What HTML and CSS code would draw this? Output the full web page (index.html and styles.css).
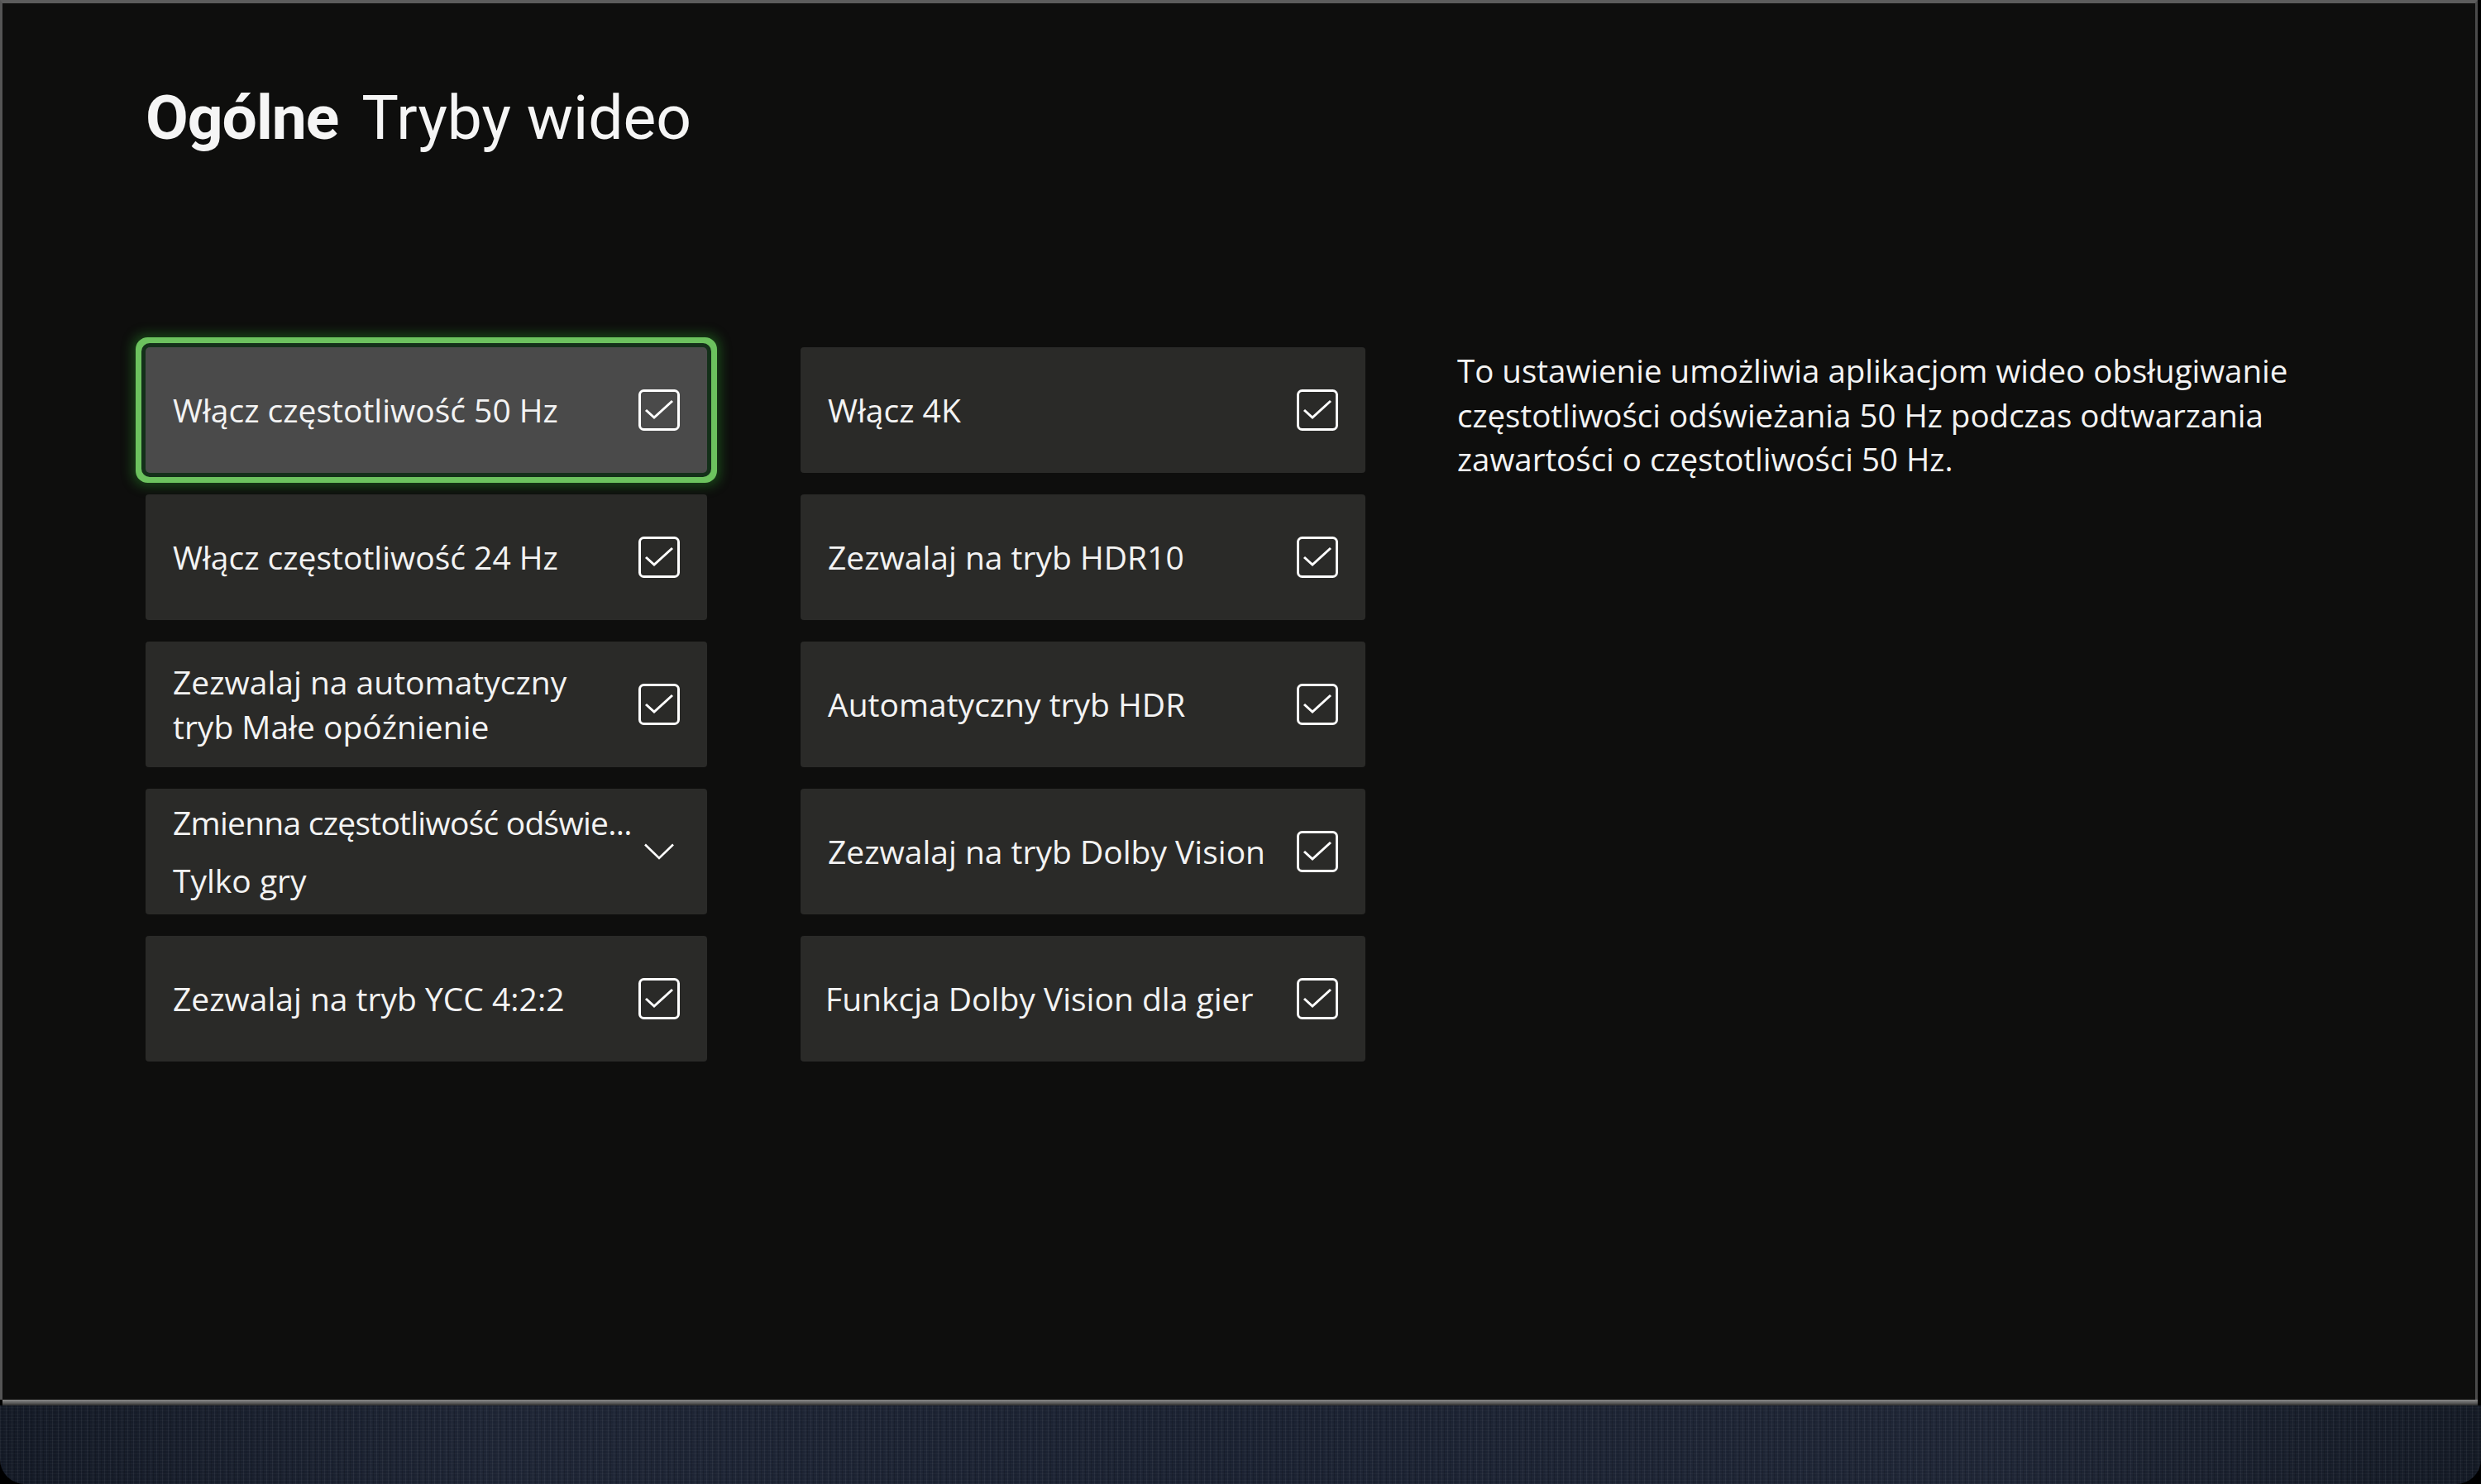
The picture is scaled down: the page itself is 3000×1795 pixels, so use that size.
FILE: index.html
```html
<!DOCTYPE html>
<html lang="pl">

<head>
    <meta charset="UTF-8">
    <meta name="viewport" content="width=device-width, initial-scale=1.0">
    <title>Tryby wideo</title>
    <link rel="stylesheet" href="styles.css">
</head>

<body>
    <div class="tv">
        <div class="screen">
            <h1 class="page-title">
                <span class="section">Ogólne</span>
                <span class="page">Tryby wideo</span>
            </h1>

            <main class="settings">
                <section class="options">
                    <div class="option focused">
                        <span class="label">Włącz częstotliwość 50 Hz</span>
                        <svg class="checkbox" viewBox="0 0 50 50"><rect x="1.5" y="1.5" width="47" height="47" rx="5"/><path d="M9 25l10 9 22-20"/></svg>
                    </div>
                    <div class="option">
                        <span class="label">Włącz 4K</span>
                        <svg class="checkbox" viewBox="0 0 50 50"><rect x="1.5" y="1.5" width="47" height="47" rx="5"/><path d="M9 25l10 9 22-20"/></svg>
                    </div>
                    <div class="option">
                        <span class="label">Włącz częstotliwość 24 Hz</span>
                        <svg class="checkbox" viewBox="0 0 50 50"><rect x="1.5" y="1.5" width="47" height="47" rx="5"/><path d="M9 25l10 9 22-20"/></svg>
                    </div>
                    <div class="option">
                        <span class="label">Zezwalaj na tryb HDR10</span>
                        <svg class="checkbox" viewBox="0 0 50 50"><rect x="1.5" y="1.5" width="47" height="47" rx="5"/><path d="M9 25l10 9 22-20"/></svg>
                    </div>
                    <div class="option">
                        <span class="label">Zezwalaj na automatyczny<br>tryb Małe opóźnienie</span>
                        <svg class="checkbox" viewBox="0 0 50 50"><rect x="1.5" y="1.5" width="47" height="47" rx="5"/><path d="M9 25l10 9 22-20"/></svg>
                    </div>
                    <div class="option">
                        <span class="label">Automatyczny tryb HDR</span>
                        <svg class="checkbox" viewBox="0 0 50 50"><rect x="1.5" y="1.5" width="47" height="47" rx="5"/><path d="M9 25l10 9 22-20"/></svg>
                    </div>
                    <div class="option dropdown">
                        <div class="dropdown-text">
                            <span class="label">Zmienna częstotliwość odświe...</span>
                            <span class="value">Tylko gry</span>
                        </div>
                        <svg class="chevron" viewBox="0 0 50 20"><path d="M8 1.5l17 16.5 17-16.5"/></svg>
                    </div>
                    <div class="option">
                        <span class="label">Zezwalaj na tryb Dolby Vision</span>
                        <svg class="checkbox" viewBox="0 0 50 50"><rect x="1.5" y="1.5" width="47" height="47" rx="5"/><path d="M9 25l10 9 22-20"/></svg>
                    </div>
                    <div class="option">
                        <span class="label">Zezwalaj na tryb YCC 4:2:2</span>
                        <svg class="checkbox" viewBox="0 0 50 50"><rect x="1.5" y="1.5" width="47" height="47" rx="5"/><path d="M9 25l10 9 22-20"/></svg>
                    </div>
                    <div class="option">
                        <span class="label tight">Funkcja Dolby Vision dla gier</span>
                        <svg class="checkbox" viewBox="0 0 50 50"><rect x="1.5" y="1.5" width="47" height="47" rx="5"/><path d="M9 25l10 9 22-20"/></svg>
                    </div>
                </section>

                <p class="description">To ustawienie umożliwia aplikacjom wideo obsługiwanie częstotliwości odświeżania 50 Hz podczas odtwarzania zawartości o częstotliwości 50 Hz.</p>
            </main>
        </div>
        <div class="bezel"></div>
        <div class="stand"></div>
    </div>
</body>

</html>
```

FILE: styles.css
```css
*, *::before, *::after {
    box-sizing: border-box;
}

:root {
    --screen-bg: #0e0e0d;
    --card-bg: #2a2a28;
    --card-focus-bg: #4a4a4a;
    --text-color: #f3f3f3;
    --focus-green: #6cc25e;
}

body {
    margin: 0;
    background: #000;
    font-family: 'Open Sans', 'Noto Sans', sans-serif;
    color: var(--text-color);
}

.tv {
    display: flex;
    flex-direction: column;
    width: 3000px;
    height: 1795px;
    overflow: hidden;
}

.screen {
    height: 1693px;
    margin-right: 4px;
    padding: 101px 0 0 173px;
    background: var(--screen-bg);
    border-top: 4px solid #5c5c5c;
    border-left: 3px solid #555;
    border-right: 3px solid #4a4a4a;
}

.page-title {
    display: flex;
    gap: 28px;
    margin: 0;
    font-family: 'Roboto', 'Liberation Sans', sans-serif;
    font-size: 75px;
    line-height: 1;
    font-weight: 400;
    color: #f5f5f5;
}

.page-title .section {
    font-weight: 700;
    letter-spacing: -1px;
}

.settings {
    display: flex;
    align-items: flex-start;
    margin-top: 240px;
}

.options {
    display: grid;
    grid-template-columns: 679px 683px;
    grid-auto-rows: 152px;
    column-gap: 113px;
    row-gap: 26px;
}

.option {
    display: flex;
    align-items: center;
    justify-content: space-between;
    padding: 0 33px 0 33px;
    background: var(--card-bg);
    border-radius: 4px;
    font-size: 39px;
    line-height: 54px;
    white-space: nowrap;
}

.option.focused {
    background: var(--card-focus-bg);
    box-shadow:
        0 0 0 5px #14301a,
        0 0 0 12px var(--focus-green),
        0 0 14px 16px rgba(40, 140, 40, 0.45);
    border-radius: 5px;
}

.label.tight {
    margin-left: -3px;
}

.checkbox {
    flex: none;
    width: 50px;
    height: 50px;
    fill: none;
    stroke: #fff;
    stroke-width: 3;
}

.dropdown-text {
    display: flex;
    flex-direction: column;
    flex: 1;
    min-width: 0;
    gap: 20px;
    line-height: 50px;
}

.dropdown-text .label {
    letter-spacing: -0.75px;
}

.chevron {
    flex: none;
    width: 50px;
    height: 20px;
    fill: none;
    stroke: #fff;
    stroke-width: 2.6;
}

.description {
    width: 1040px;
    margin: 2px 0 0 111px;
    font-size: 38.5px;
    line-height: 53.5px;
}

.bezel {
    height: 7px;
    margin: 0 4px 0 3px;
    background: linear-gradient(#8a8a8a, #5a5a5a 60%, #2a2a2a);
}

.stand {
    flex: 1;
    border-radius: 0 0 30px 30px;
    background:
        repeating-linear-gradient(90deg, rgba(255, 255, 255, 0.05) 0 1px, transparent 1px 3px, rgba(0, 0, 0, 0.14) 3px 4px, transparent 4px 7px),
        repeating-linear-gradient(0deg, rgba(255, 255, 255, 0.03) 0 1px, transparent 1px 4px),
        linear-gradient(90deg, #141a26, #1e2535 20%, #1b2232 50%, #1f2636 80%, #141a25);
}
```
